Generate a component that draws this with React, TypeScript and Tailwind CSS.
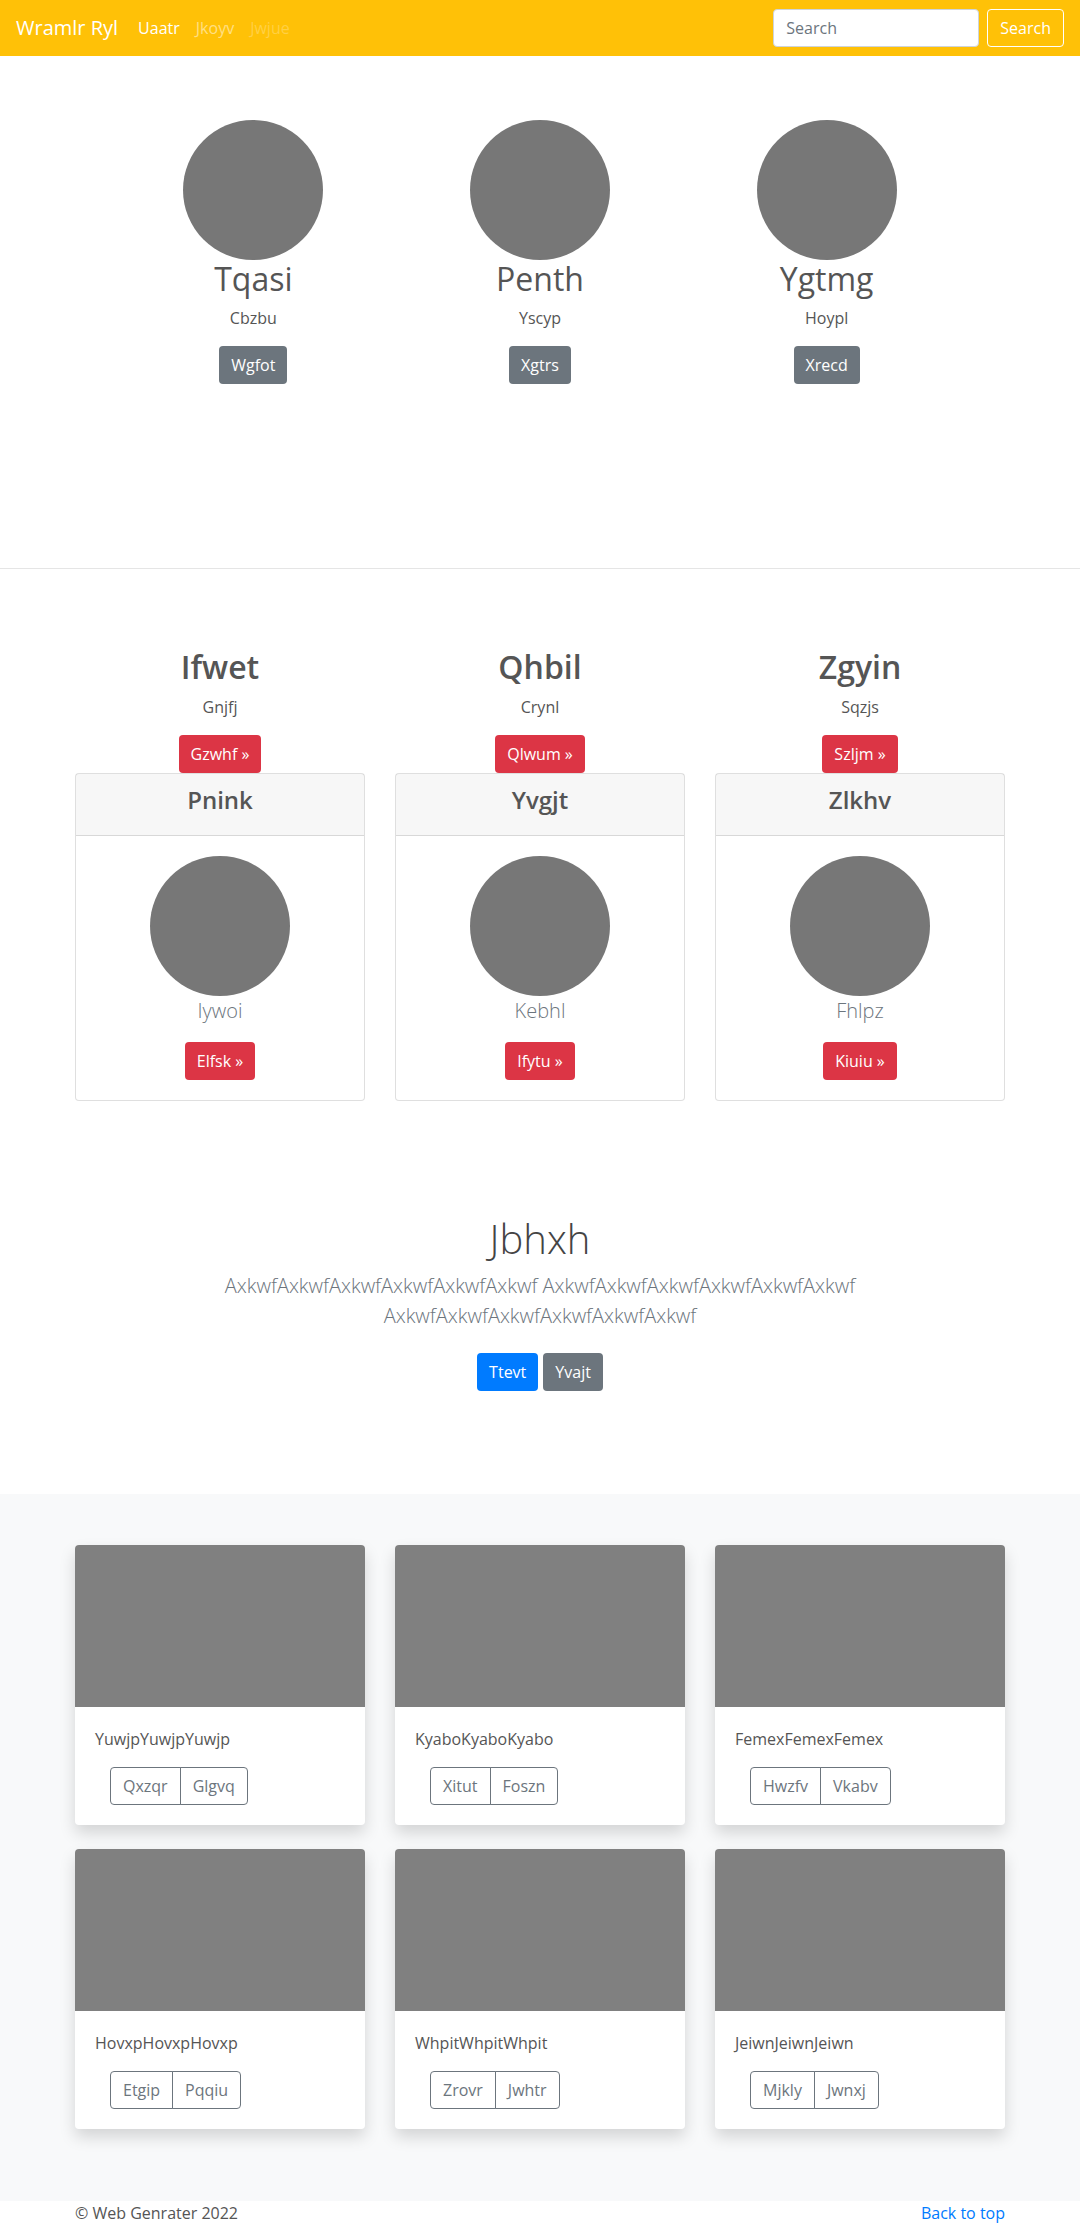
import React from 'react';

const heroes = [
  { name: 'Tqasi', sub: 'Cbzbu', btn: 'Wgfot' },
  { name: 'Penth', sub: 'Yscyp', btn: 'Xgtrs' },
  { name: 'Ygtmg', sub: 'Hoypl', btn: 'Xrecd' },
];

const plans = [
  { title: 'Ifwet', sub: 'Gnjfj', btn: 'Gzwhf', card: 'Pnink', caption: 'Iywoi', cardBtn: 'Elfsk' },
  { title: 'Qhbil', sub: 'Crynl', btn: 'Qlwum', card: 'Yvgjt', caption: 'Kebhl', cardBtn: 'Ifytu' },
  { title: 'Zgyin', sub: 'Sqzjs', btn: 'Szljm', card: 'Zlkhv', caption: 'Fhlpz', cardBtn: 'Kiuiu' },
];

const albums = [
  { text: 'YuwjpYuwjpYuwjp', a: 'Qxzqr', b: 'Glgvq' },
  { text: 'KyaboKyaboKyabo', a: 'Xitut', b: 'Foszn' },
  { text: 'FemexFemexFemex', a: 'Hwzfv', b: 'Vkabv' },
  { text: 'HovxpHovxpHovxp', a: 'Etgip', b: 'Pqqiu' },
  { text: 'WhpitWhpitWhpit', a: 'Zrovr', b: 'Jwhtr' },
  { text: 'JeiwnJeiwnJeiwn', a: 'Mjkly', b: 'Jwnxj' },
];

export default function App() {
  return (
    <div className="min-h-screen bg-white font-['Segoe_UI','Open_Sans',sans-serif] text-base leading-6 text-[#555]">
      {/* Navbar */}
      <nav className="flex h-14 items-center bg-[#ffc107] px-4">
        <a className="mr-3 text-xl leading-[30px] text-white">Wramlr Ryl</a>
        <ul className="flex">
          <li><a className="block px-2 font-normal text-white">Uaatr</a></li>
          <li><a className="block px-2 text-white/50">Jkoyv</a></li>
          <li><a className="block px-2 text-white/25">Jwjue</a></li>
        </ul>
        <form className="ml-auto flex items-center">
          <input
            placeholder="Search"
            className="mr-2 h-[38px] w-[206px] rounded border border-[#ced4da] bg-white px-3 text-base text-[#495057] placeholder:text-[#6c757d] outline-none"
          />
          <button type="button" className="h-[38px] rounded border border-white px-3 text-white">
            Search
          </button>
        </form>
      </nav>

      {/* Marketing circles */}
      <section className="pt-16 pb-[184px]">
        <div className="mx-auto grid w-[860px] grid-cols-3">
          {heroes.map((h) => (
            <div key={h.name} className="flex flex-col items-center text-center">
              <div className="h-[140px] w-[140px] rounded-full bg-[#777]" />
              <h2 className="mb-2 text-[32px] leading-[1.2] font-normal">{h.name}</h2>
              <p className="mb-4">{h.sub}</p>
              <a className="flex h-[38px] items-center rounded bg-[#6c757d] px-3 text-white">{h.btn}</a>
            </div>
          ))}
        </div>
      </section>
      <hr className="border-t border-black/10" />

      {/* Plans with cards */}
      <section className="pt-[79px]">
        <div className="mx-auto grid max-w-[960px] grid-cols-3 gap-[30px] px-[15px]">
          {plans.map((p) => (
            <div key={p.title} className="flex flex-col items-center text-center">
              <h2 className="mb-2 text-[32px] leading-[1.2] font-semibold">{p.title}</h2>
              <p className="mb-4">{p.sub}</p>
              <a className="flex h-[38px] items-center rounded bg-[#dc3545] px-3 text-white">{p.btn} »</a>
              <div className="w-full rounded border border-black/[0.125] bg-white">
                <div className="border-b border-black/[0.125] bg-black/[0.03] px-5 py-3">
                  <h4 className="mb-2 text-2xl leading-[1.2] font-semibold">{p.card}</h4>
                </div>
                <div className="flex flex-col items-center p-5">
                  <div className="h-[140px] w-[140px] rounded-full bg-[#777]" />
                  <p className="mb-4 text-xl leading-[30px] font-light text-[#6c757d]">{p.caption}</p>
                  <a className="flex h-[38px] items-center rounded bg-[#dc3545] px-3 text-white">{p.cardBtn} »</a>
                </div>
              </div>
            </div>
          ))}
        </div>
      </section>

      {/* Jumbotron */}
      <section className="pt-[114px] pb-[95px] text-center">
        <div className="mx-auto max-w-[680px] px-[15px]">
          <h1 className="mb-2 text-[40px] leading-[1.2] font-light text-[#444]">Jbhxh</h1>
          <p className="mb-[14px] text-xl leading-[30px] font-light text-[#6c757d]">
            AxkwfAxkwfAxkwfAxkwfAxkwfAxkwf AxkwfAxkwfAxkwfAxkwfAxkwfAxkwf AxkwfAxkwfAxkwfAxkwfAxkwfAxkwf
          </p>
          <div className="flex justify-center gap-[5px]">
            <a className="my-2 flex h-[38px] items-center rounded bg-[#007bff] px-3 text-white">Ttevt</a>
            <a className="my-2 flex h-[38px] items-center rounded bg-[#6c757d] px-3 text-white">Yvajt</a>
          </div>
        </div>
      </section>

      {/* Album */}
      <section className="bg-[#f8f9fa] pt-[51px] pb-[72px]">
        <div className="mx-auto grid max-w-[960px] grid-cols-3 gap-x-[30px] gap-y-6 px-[15px]">
          {albums.map((a) => (
            <div key={a.text} className="rounded bg-white shadow-[0_8px_16px_rgba(0,0,0,0.15)]">
              <div className="h-[162px] rounded-t bg-[#808080]" />
              <div className="p-5">
                <p className="mb-4">{a.text}</p>
                <div className="ml-[15px] inline-flex">
                  <button type="button" className="h-[38px] rounded-l border border-[#6c757d] px-3 text-[#6c757d]">{a.a}</button>
                  <button type="button" className="-ml-px h-[38px] rounded-r border border-[#6c757d] px-3 text-[#6c757d]">{a.b}</button>
                </div>
              </div>
            </div>
          ))}
        </div>
      </section>

      {/* Footer */}
      <footer className="pb-12">
        <div className="mx-auto flex max-w-[960px] justify-between px-[15px]">
          <p>© Web Genrater 2022</p>
          <a className="text-[#007bff]">Back to top</a>
        </div>
      </footer>
    </div>
  );
}
